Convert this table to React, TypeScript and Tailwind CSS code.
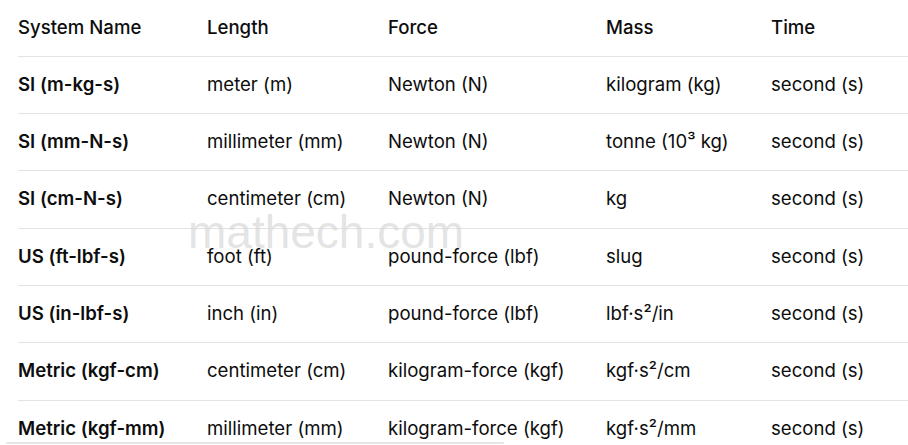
const rows: string[][] = [
  ['SI (m-kg-s)', 'meter (m)', 'Newton (N)', 'kilogram (kg)', 'second (s)'],
  ['SI (mm-N-s)', 'millimeter (mm)', 'Newton (N)', 'tonne (10³ kg)', 'second (s)'],
  ['SI (cm-N-s)', 'centimeter (cm)', 'Newton (N)', 'kg', 'second (s)'],
  ['US (ft-lbf-s)', 'foot (ft)', 'pound-force (lbf)', 'slug', 'second (s)'],
  ['US (in-lbf-s)', 'inch (in)', 'pound-force (lbf)', 'lbf·s²/in', 'second (s)'],
  ['Metric (kgf-cm)', 'centimeter (cm)', 'kilogram-force (kgf)', 'kgf·s²/cm', 'second (s)'],
  ['Metric (kgf-mm)', 'millimeter (mm)', 'kilogram-force (kgf)', 'kgf·s²/mm', 'second (s)'],
];

const headers = ['System Name', 'Length', 'Force', 'Mass', 'Time'];
const widths = ['w-[189px]', 'w-[181px]', 'w-[218px]', 'w-[165px]', 'w-[160px]'];

export default function App() {
  return (
    <div className="relative h-[445px] w-[908px] overflow-hidden bg-white font-['Inter',sans-serif] text-[18.6px] text-[#0d0d0d]">
      <div className="pl-[18px]">
        <div className="flex h-[56.5px] items-center border-b border-[#e3e3e3] font-medium">
          {headers.map((h, i) => (
            <div key={h} className={`${widths[i]} shrink-0`}>{h}</div>
          ))}
        </div>
        {rows.map((r) => (
          <div key={r[0]} className="flex h-[57.35px] items-center border-b border-[#e3e3e3]">
            {r.map((c, i) => (
              <div key={i} className={`${widths[i]} shrink-0 ${i === 0 ? 'font-semibold' : ''}`}>{c}</div>
            ))}
          </div>
        ))}
      </div>

      {/* watermark */}
      <div className="pointer-events-none absolute left-[188px] top-[209px] font-['Liberation_Sans',sans-serif] text-[46px] leading-none text-[#d8d8d8]/70">
        mathech.com
      </div>

      {/* scrollbar thumb */}
      <div className="absolute bottom-[1px] left-[6px] h-[2px] w-[498px] rounded bg-[#e6e6e6]" />
    </div>
  );
}
